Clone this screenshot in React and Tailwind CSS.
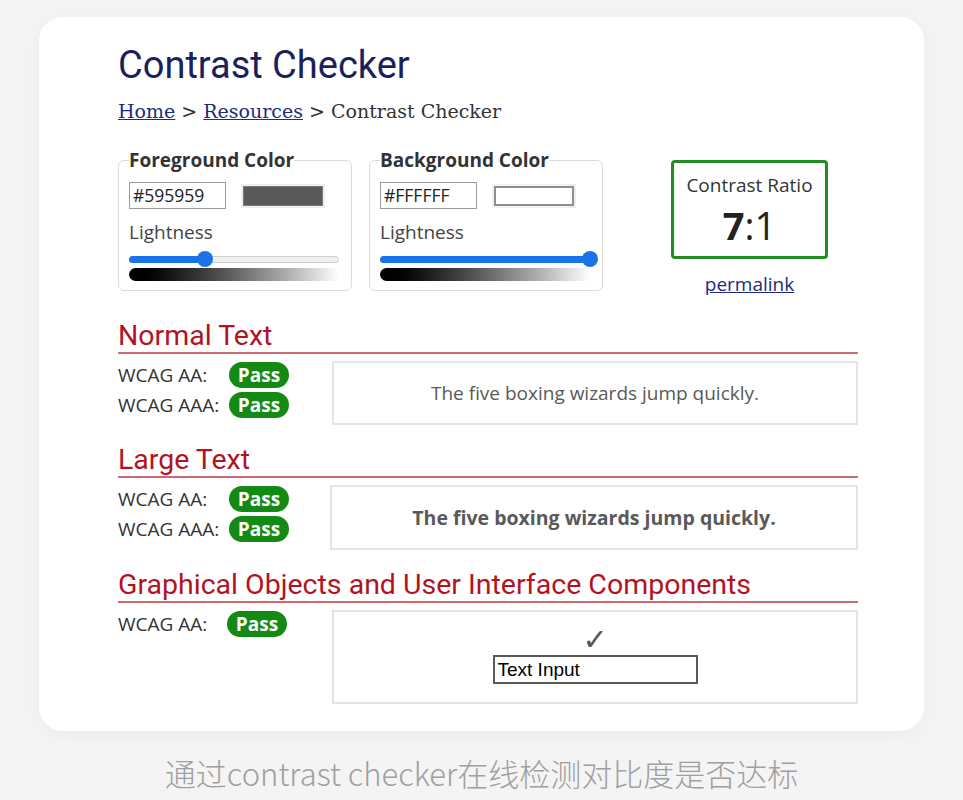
import React from 'react'

const sans = { fontFamily: '"Open Sans", "Noto Sans", sans-serif' }

function Swatch({ light }) {
  return (
    <div className="ml-[15px] mt-[2px] w-[84px] h-[24px] bg-[#efefef] p-[2px]">
      <div
        className={
          light
            ? 'w-full h-full border-2 border-[#8f8f8f] bg-white'
            : 'w-full h-full border border-[#7a7a7a] bg-[#595959]'
        }
      />
    </div>
  )
}

function Slider({ pct }) {
  return (
    <div className="mt-[6px] w-[210px]">
      <div className="relative h-[16px]">
        <div className="absolute left-0 right-0 top-[5px] h-[7px] rounded-full bg-[#efefef] border border-[#cfcfcf]" />
        <div
          className="absolute left-0 top-[5px] h-[7px] rounded-full bg-[#1a73e8]"
          style={{ width: pct + '%' }}
        />
        <div
          className="absolute top-0 w-[16px] h-[16px] -ml-[8px] rounded-full bg-[#1a73e8]"
          style={{ left: pct + '%' }}
        />
      </div>
      <div className="mt-[1px] h-[13px] rounded-l-full bg-gradient-to-r from-black to-white" />
    </div>
  )
}

function ColorField({ label, hex, pct, light }) {
  return (
    <fieldset className="w-[234px] border border-[#dcdcdc] rounded-[6px] px-[10px] pb-[9px]">
      <legend className="px-0 text-[19px] leading-[26px] font-bold text-[#333]" style={sans}>
        {label}
      </legend>
      <div className="flex items-start mt-[9px]">
        <div className="w-[97px] h-[27px] border border-[#9a9a9a] px-[3px] text-[17.5px] leading-[25px] text-[#222]" style={sans}>
          {hex}
        </div>
        <Swatch light={light} />
      </div>
      <div className="mt-[10px] text-[19px] leading-[26px] text-[#444]" style={sans}>
        Lightness
      </div>
      <Slider pct={pct} />
    </fieldset>
  )
}

function Heading({ children }) {
  return (
    <div>
      <h2
        className="text-[28.5px] leading-[33px] text-[#b3131f]"
        style={{ fontFamily: 'Roboto, sans-serif' }}
      >
        {children}
      </h2>
      <div className="h-[2px] bg-[#cc6a72]" />
    </div>
  )
}

function Pass() {
  return (
    <span className="inline-flex items-center justify-center w-[60px] h-[26px] rounded-full bg-[#138a13] text-white font-bold text-[19px]" style={sans}>
      Pass
    </span>
  )
}

function Row({ label, w = 'w-[111px]' }) {
  return (
    <div className="flex items-center h-[26px]">
      <span className={w + ' text-[19px] text-[#333]'} style={sans}>{label}</span>
      <Pass />
    </div>
  )
}

export default function App() {
  return (
    <div className="min-h-[800px] bg-[#f4f4f4] pt-[17px]">
      <div className="ml-[39px] w-[885px] rounded-[24px] bg-white shadow-[0_4px_20px_rgba(0,0,0,0.04)] pl-[79px] pt-[26px] pb-[27px]">
        <div className="w-[740px]">
          <h1 className="text-[38px] leading-[45px] text-[#1c1f5e]" style={{ fontFamily: 'Roboto, sans-serif' }}>
            Contrast Checker
          </h1>
          <div className="mt-[10px] text-[19px] leading-[27px] text-[#333]" style={{ fontFamily: '"DejaVu Serif", serif' }}>
            <a className="text-[#1c2a80] underline">Home</a> &gt;{' '}
            <a className="text-[#1c2a80] underline">Resources</a> &gt; Contrast Checker
          </div>

          <div className="flex items-start mt-[22px]">
            <ColorField label="Foreground Color" hex="#595959" pct={36} />
            <div className="ml-[17px]">
              <ColorField label="Background Color" hex="#FFFFFF" pct={100} light />
            </div>
            <div className="ml-[68px] mt-[13px] flex flex-col items-center">
              <div className="w-[157px] h-[99px] border-[3px] border-[#238c23] rounded-[4px] flex flex-col items-center text-[#333]" style={sans}>
                <div className="mt-[9px] text-[19px] leading-[26px]">Contrast Ratio</div>
                <div className="mt-[4px] text-[38px] leading-[46px] text-[#222]">
                  <b>7</b>:1
                </div>
              </div>
              <a className="mt-[12px] text-[19px] leading-[26px] text-[#1c2a80] underline" style={sans}>permalink</a>
            </div>
          </div>

          <div className="mt-[22px]">
            <Heading>Normal Text</Heading>
            <div className="flex mt-[7px]">
              <div className="w-[214px] pt-[1px] flex flex-col gap-[4px]">
                <Row label="WCAG AA:" />
                <Row label="WCAG AAA:" />
              </div>
              <div className="flex-1 h-[64px] border-2 border-[#e4e4e4] flex items-center justify-center text-[19px] text-[#595959]" style={sans}>
                The five boxing wizards jump quickly.
              </div>
            </div>
          </div>

          <div className="mt-[18px]">
            <Heading>Large Text</Heading>
            <div className="flex mt-[7px]">
              <div className="w-[212px] pt-[1px] flex flex-col gap-[4px]">
                <Row label="WCAG AA:" />
                <Row label="WCAG AAA:" />
              </div>
              <div className="flex-1 h-[65px] border-2 border-[#e4e4e4] flex items-center justify-center text-[19.5px] font-bold text-[#595959]" style={sans}>
                The five boxing wizards jump quickly.
              </div>
            </div>
          </div>

          <div className="mt-[18px]">
            <Heading>Graphical Objects and User Interface Components</Heading>
            <div className="flex mt-[7px]">
              <div className="w-[214px] pt-[1px]">
                <Row label="WCAG AA:" w="w-[109px]" />
              </div>
              <div className="flex-1 h-[94px] border-2 border-[#e4e4e4] flex flex-col items-center">
                <div className="mt-[15px] text-[30px] leading-[26px] text-[#555]" style={{ fontFamily: '"DejaVu Sans", sans-serif' }}>✓</div>
                <div className="mt-[2px] w-[205px] h-[29px] border-2 border-[#595959] px-[3px] text-[19px] leading-[25px] text-black" style={{ fontFamily: '"Liberation Sans", Arial, sans-serif' }}>
                  Text Input
                </div>
              </div>
            </div>
          </div>
        </div>
      </div>
      <div className="mt-[22px] text-center text-[31px] leading-[40px] text-[#a0a0a0]" style={{ fontFamily: '"Noto Sans CJK SC", sans-serif', fontWeight: 300 }}>
        通过contrast checker在线检测对比度是否达标
      </div>
    </div>
  )
}
